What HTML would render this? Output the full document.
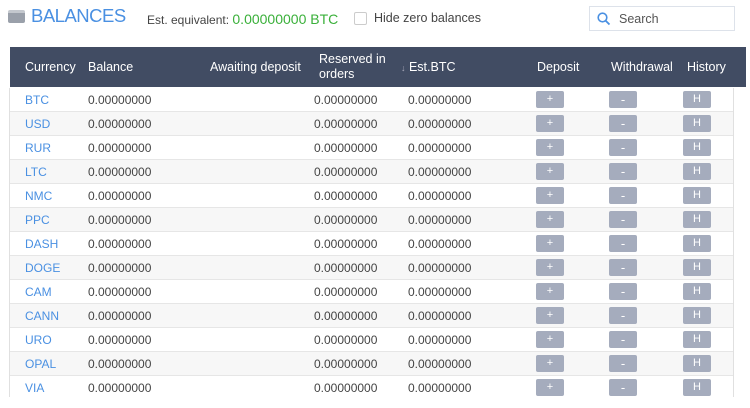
<!DOCTYPE html>
<html><head><style>
body{margin:0;width:750px;height:408px;overflow:hidden;background:#fff;font-family:"Liberation Sans",sans-serif;position:relative}
.a{position:absolute;white-space:nowrap}
.row{position:absolute;left:10px;width:723px;height:24px;border-bottom:1px solid #e6e6e6;box-sizing:border-box;font-size:12px;color:#444}
.row span{position:absolute;top:5px}
.b{position:absolute;top:3px;width:28px;height:17px;background:#a5acbd;border-radius:2px;color:#fff;font-size:11px;text-align:center;line-height:17px}
.h{position:absolute;color:#fff;font-size:12.5px}
</style></head><body>
<div class="a" style="left:8px;top:11px;width:17px;height:12px;background:#9aa0aa;border-radius:2px"></div>
<div class="a" style="left:8px;top:10px;width:17px;height:3px;background:#c4c8ce;border-radius:2px 2px 0 0"></div>
<div class="a" style="left:31px;top:5px;font-size:18.5px;color:#4a90e2;letter-spacing:-0.5px">BALANCES</div>
<div class="a" style="left:147px;top:11px;font-size:12px;color:#444">Est. equivalent: <span style="color:#3ab03a;font-size:14px">0.00000000 BTC</span></div>
<div class="a" style="left:354px;top:12px;width:11px;height:11px;border:1px solid #ccc;border-radius:2px"></div>
<div class="a" style="left:374px;top:11px;font-size:12.5px;color:#444">Hide zero balances</div>
<div class="a" style="left:589px;top:6px;width:146px;height:25px;border:1px solid #dde2ea;box-sizing:border-box"></div>
<svg class="a" style="left:597px;top:12px" width="14" height="14" viewBox="0 0 14 14"><circle cx="5.5" cy="5.5" r="4.3" fill="none" stroke="#4a90e2" stroke-width="1.6"/><line x1="8.7" y1="8.7" x2="12.5" y2="12.5" stroke="#4a90e2" stroke-width="1.8"/></svg>
<div class="a" style="left:619px;top:12px;font-size:12.5px;color:#555">Search</div>
<div class="a" style="left:9px;top:88px;width:725px;height:309px;border-left:1px solid #e0e0e0;border-right:1px solid #e0e0e0;box-sizing:border-box"></div>
<div class="a" style="left:10px;top:47px;width:736px;height:40px;background:#414c63"></div>
<div class="h" style="left:25px;top:60px">Currency</div>
<div class="h" style="left:88px;top:60px">Balance</div>
<div class="h" style="left:210px;top:60px">Awaiting deposit</div>
<div class="h" style="left:319px;top:52px;line-height:15px">Reserved in<br>orders</div>
<div class="h" style="left:401px;top:60px"><span style="font-size:9px;color:#aab">↓</span> Est.BTC</div>
<div class="h" style="left:537px;top:60px">Deposit</div>
<div class="h" style="left:611px;top:60px">Withdrawal</div>
<div class="h" style="left:687px;top:60px">History</div>
<div style="position:absolute;left:0;top:88px;width:750px;height:309px;overflow:hidden">
<script>
var c=["BTC","USD","RUR","LTC","NMC","PPC","DASH","DOGE","CAM","CANN","URO","OPAL","VIA"],h="";
c.forEach(function(x,i){h+='<div class="row" style="top:'+(i*24)+'px;background:'+(i%2?'#f7f7f7':'#fff')+'"><span style="left:15px;color:#4a90e2">'+x+'</span><span style="left:78px">0.00000000</span><span style="left:304px">0.00000000</span><span style="left:398px">0.00000000</span><div class="b" style="left:526px">+</div><div class="b" style="left:599px;font-size:13px">-</div><div class="b" style="left:673px">H</div></div>'});
document.write(h);
</script>
</div>
</body></html>
